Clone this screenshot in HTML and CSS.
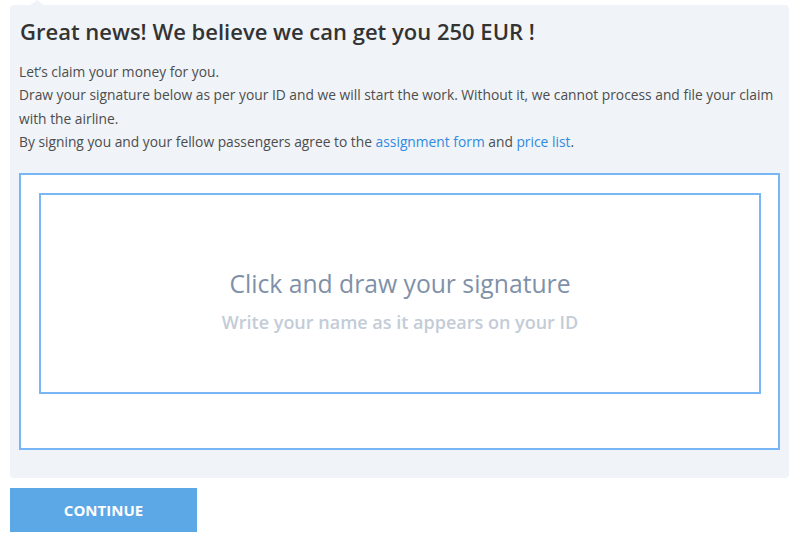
FILE: index.html
```html
<!DOCTYPE html>
<html>
<head>
<meta charset="utf-8">
<link rel="stylesheet" href="styles.css">
</head>
<body>
<div class="panel">
  <h1 class="title">Great news! We believe we can get you 250 EUR !</h1>
  <div class="intro">
    <p>Let’s claim your money for you.</p>
    <p>Draw your signature below as per your ID and we will start the work. Without it, we cannot process and file your claim with the airline.</p>
    <p>By signing you and your fellow passengers agree to the <a href="#" class="link">assignment form</a> and <a href="#" class="link">price list</a>.</p>
  </div>
  <div class="sig-outer">
    <div class="sig-inner">
      <div class="sig-title">Click and draw your signature</div>
      <div class="sig-sub">Write your name as it appears on your ID</div>
    </div>
  </div>
</div>
<button class="continue">CONTINUE</button>
</body>
</html>
```
FILE: styles.css
```css
html, body {
  margin: 0;
  padding: 0;
  background: #fff;
  font-family: "Open Sans", "Noto Sans", sans-serif;
}
.panel {
  position: relative;
  margin: 5px 11px 0 10px;
  padding: 11px 9px 28px 9px;
  background: #f0f4f8;
  border-radius: 4px;
}
.panel::before {
  content: "";
  position: absolute;
  top: -5px;
  left: 20px;
  border-left: 7px solid transparent;
  border-right: 7px solid transparent;
  border-bottom: 5px solid #f0f4f8;
}
.title {
  margin: 0 0 0 1px;
  font-size: 22px;
  line-height: 30px;
  font-weight: 600;
  color: #333;
}
.intro {
  margin-top: 14px;
  font-size: 13.8px;
  line-height: 23.3px;
  color: #4d4d4d;
}
.intro p {
  margin: 0;
}
.link {
  color: #2f8ae0;
  text-decoration: none;
}
.sig-outer {
  margin-top: 20px;
  background: #fff;
  border: 2px solid #79b6f6;
  padding: 18px 17px 54px 18px;
}
.sig-inner {
  height: 197px;
  border: 2px solid #79b6f6;
  text-align: center;
}
.sig-title {
  padding-top: 73px;
  font-size: 24.7px;
  line-height: 32px;
  color: #7f91a8;
}
.sig-sub {
  margin-top: 10px;
  font-size: 18px;
  line-height: 24px;
  font-weight: 600;
  color: #c3ccd7;
}
.continue {
  display: block;
  margin: 10px 0 0 10px;
  width: 187px;
  height: 44px;
  border: none;
  background: #5ca8e6;
  color: #fff;
  font-family: "Open Sans", "Noto Sans", sans-serif;
  font-weight: 700;
  font-size: 15px;
  padding: 0;
}
```
